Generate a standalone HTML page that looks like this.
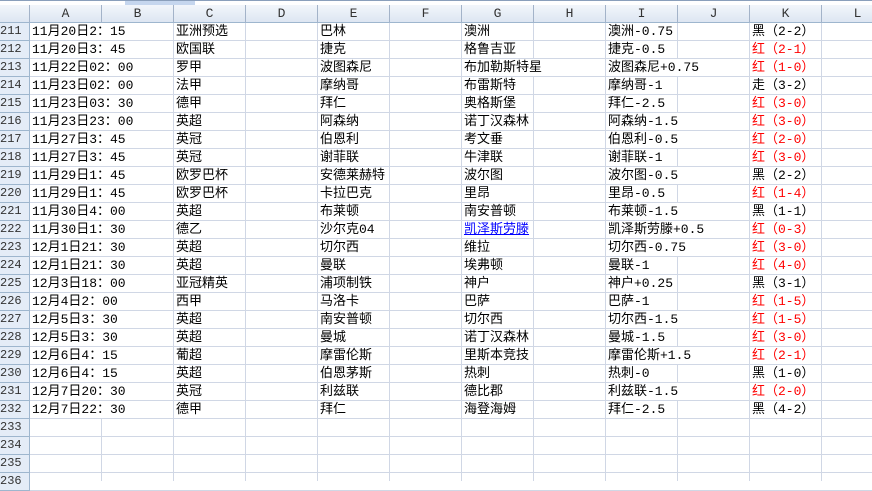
<!DOCTYPE html><html><head><meta charset="utf-8"><style>
body{margin:0;width:872px;height:481px;overflow:hidden;background:#fff;position:relative;font-family:"Liberation Mono","Noto Sans CJK SC",monospace;font-size:13px;color:#000}
.top{position:absolute;left:0;top:0;width:872px;height:5px;background:#fff;border-top:1px solid #8a9fbb}
.top i{position:absolute;left:125px;top:0;width:70px;height:4px;background:#c5d6ee}
.hdr{position:absolute;top:5px;height:18px;background:linear-gradient(#f2f6fb,#dde6f2);border-right:1px solid #a3b3c9;border-bottom:1px solid #9eb6ce;box-sizing:border-box;text-align:center;line-height:17px;color:#333;font-size:13px}
.rh{position:absolute;left:0;width:30px;height:18px;background:#e4ecf7;border-bottom:1px solid #9eb6ce;border-right:1px solid #9eb6ce;box-sizing:border-box;line-height:17px;font-size:12px;color:#333;padding-left:0}
.gv{position:absolute;top:23px;bottom:0;width:1px;background:#d0d7e5}
.gh{position:absolute;left:30px;right:0;height:1px;background:#d0d7e5}
.c{position:absolute;height:17px;line-height:18px;white-space:nowrap;background:#fff;padding-left:2px}
.r{color:#f00}.a{color:#00f;text-decoration:underline}
</style></head><body>
<div class="top"><i></i></div>
<div class="hdr" style="left:0;width:30px"></div>
<div id="g"></div>
<script>
var L="ABCDEFGHIJKL",h="";
for(var i=0;i<12;i++){var x=30+72*i;h+='<div class="hdr" style="left:'+x+'px;width:72px">'+L[i]+'</div>';h+='<div class="gv" style="left:'+(x+71)+'px"></div>';}
for(var r=0;r<26;r++){var y=23+18*r;h+='<div class="gh" style="top:'+(y+17)+'px"></div><div class="rh" style="top:'+y+'px">'+(211+r)+'</div>';}
var d=[
["11月20日2：15","亚洲预选","巴林","澳洲","澳洲-0.75","黑（2-2）"],
["11月20日3：45","欧国联","捷克","格鲁吉亚","捷克-0.5","红（2-1）"],
["11月22日02：00","罗甲","波图森尼","布加勒斯特星","波图森尼+0.75","红（1-0）"],
["11月23日02：00","法甲","摩纳哥","布雷斯特","摩纳哥-1","走（3-2）"],
["11月23日03：30","德甲","拜仁","奥格斯堡","拜仁-2.5","红（3-0）"],
["11月23日23：00","英超","阿森纳","诺丁汉森林","阿森纳-1.5","红（3-0）"],
["11月27日3：45","英冠","伯恩利","考文垂","伯恩利-0.5","红（2-0）"],
["11月27日3：45","英冠","谢菲联","牛津联","谢菲联-1","红（3-0）"],
["11月29日1：45","欧罗巴杯","安德莱赫特","波尔图","波尔图-0.5","黑（2-2）"],
["11月29日1：45","欧罗巴杯","卡拉巴克","里昂","里昂-0.5","红（1-4）"],
["11月30日4：00","英超","布莱顿","南安普顿","布莱顿-1.5","黑（1-1）"],
["11月30日1：30","德乙","沙尔克04","凯泽斯劳滕","凯泽斯劳滕+0.5","红（0-3）"],
["12月1日21：30","英超","切尔西","维拉","切尔西-0.75","红（3-0）"],
["12月1日21：30","英超","曼联","埃弗顿","曼联-1","红（4-0）"],
["12月3日18：00","亚冠精英","浦项制铁","神户","神户+0.25","黑（3-1）"],
["12月4日2：00","西甲","马洛卡","巴萨","巴萨-1","红（1-5）"],
["12月5日3：30","英超","南安普顿","切尔西","切尔西-1.5","红（1-5）"],
["12月5日3：30","英超","曼城","诺丁汉森林","曼城-1.5","红（3-0）"],
["12月6日4：15","葡超","摩雷伦斯","里斯本竞技","摩雷伦斯+1.5","红（2-1）"],
["12月6日4：15","英超","伯恩茅斯","热刺","热刺-0","黑（1-0）"],
["12月7日20：30","英冠","利兹联","德比郡","利兹联-1.5","红（2-0）"],
["12月7日22：30","德甲","拜仁","海登海姆","拜仁-2.5","黑（4-2）"]];
var cols=[0,2,4,6,8,10];
for(var r=0;r<d.length;r++){var y=23+18*r;for(var k=0;k<6;k++){var x=30+72*cols[k];var t=d[r][k];var cl=(k==5&&t[0]=="红")?" r":(r==11&&k==3?" a":"");h+='<div class="c'+cl+'" style="top:'+y+'px;left:'+x+'px">'+t+'</div>';}}
document.getElementById('g').innerHTML=h;
</script>
</body></html>
